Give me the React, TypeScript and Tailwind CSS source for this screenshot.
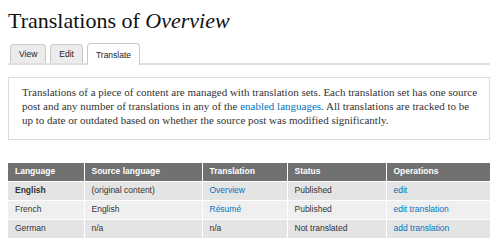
import React from 'react';

type Row = {
  language: string;
  source: string;
  translation: string;
  translationLink: boolean;
  status: string;
  operation: string;
  isSource?: boolean;
};

const rows: Row[] = [
  { language: 'English', source: '(original content)', translation: 'Overview', translationLink: true, status: 'Published', operation: 'edit', isSource: true },
  { language: 'French', source: 'English', translation: 'Résumé', translationLink: true, status: 'Published', operation: 'edit translation' },
  { language: 'German', source: 'n/a', translation: 'n/a', translationLink: false, status: 'Not translated', operation: 'add translation' },
];

const tabs = ['View', 'Edit', 'Translate'];

export default function App() {
  return (
    <div className="w-[498px] h-[251px] overflow-hidden bg-white px-2 pt-2 text-[#333]">
      <h1 className="font-['Liberation_Serif',serif] text-[22px] leading-[26px] text-[#111]">
        Translations of <em>Overview</em>
      </h1>

      {/* Tabs */}
      <div className="mt-[9px] flex items-end gap-1 border-b-2 border-[#e0e0e0] pl-[2px]">
        {tabs.map(tab => {
          const active = tab === 'Translate';
          return (
            <div
              key={tab}
              className={
                active
                  ? "-mb-[2px] h-[22px] rounded-t-[4px] border border-b-0 border-[#c9c9c9] bg-white px-2 pt-[2px] font-['Liberation_Sans',Arial,sans-serif] text-[8.5px] leading-[18px] text-[#222]"
                  : "h-[19px] rounded-t-[4px] border border-b-0 border-[#c9c9c9] bg-[#ececec] px-2 font-['Liberation_Sans',Arial,sans-serif] text-[8.5px] leading-[18px] text-[#222]"
              }
            >
              {tab}
            </div>
          );
        })}
      </div>

      {/* Help box */}
      <div className="mt-3 whitespace-nowrap border border-[#dcdcdc] px-[13px] pt-[7px] pb-[12px] font-['Liberation_Serif',serif] text-[11px] leading-[14px] text-[#333]">
        Translations of a piece of content are managed with translation sets. Each translation set has one source
        <br />
        post and any number of translations in any of the{' '}
        <a className="text-[#0074bd]">enabled languages</a>. All translations are tracked to be
        <br />
        up to date or outdated based on whether the source post was modified significantly.
      </div>

      {/* Translations table */}
      <table className="mt-[23px] w-[482px] table-fixed border-collapse font-['Liberation_Sans',Arial,sans-serif] text-[8.5px]">
        <colgroup>
          <col className="w-[76px]" />
          <col className="w-[118px]" />
          <col className="w-[85px]" />
          <col className="w-[99px]" />
          <col className="w-[104px]" />
        </colgroup>
        <thead>
          <tr className="h-[18px] bg-[#717171] text-left text-white">
            <th className="px-[7px] font-bold">Language</th>
            <th className="border-l border-white px-[7px] font-bold">Source language</th>
            <th className="border-l border-white px-[7px] font-bold">Translation</th>
            <th className="border-l border-white px-[7px] font-bold">Status</th>
            <th className="border-l border-white px-[7px] font-bold">Operations</th>
          </tr>
        </thead>
        <tbody>
          {rows.map((row, i) => (
            <tr
              key={row.language}
              className={i % 2 === 0 ? 'h-[19px] border-t border-white bg-[#e4e4e4] text-[#333]' : 'h-[19px] border-t border-white bg-[#efefef] text-[#333]'}
            >
              <td className={row.isSource ? 'px-[7px] font-bold' : 'px-[7px]'}>{row.language}</td>
              <td className="border-l border-white px-[7px]">{row.source}</td>
              <td className="border-l border-white px-[7px]">
                {row.translationLink ? <a className="text-[#0074bd]">{row.translation}</a> : row.translation}
              </td>
              <td className="border-l border-white px-[7px]">{row.status}</td>
              <td className="border-l border-white px-[7px]">
                <a className="text-[#0074bd]">{row.operation}</a>
              </td>
            </tr>
          ))}
        </tbody>
      </table>
    </div>
  );
}
